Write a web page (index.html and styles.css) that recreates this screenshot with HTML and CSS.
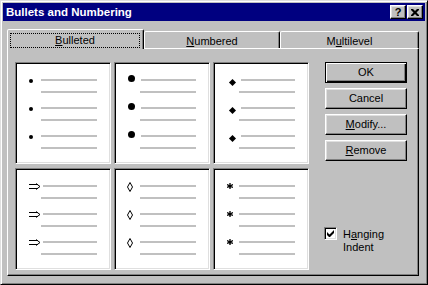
FILE: index.html
```html
<!DOCTYPE html>
<html lang="en">

<head>
    <meta charset="UTF-8" />
    <title>Bullets and Numbering</title>
    <link rel="stylesheet" href="styles.css">
</head>

<body>
    <div class="window">
        <!-- title bar -->
        <div class="titlebar">
            <span class="title">Bullets and Numbering</span>
            <span class="tbtn help">?</span>
            <span class="tbtn close">
                <svg width="8" height="7" viewBox="0 0 8 7"><path d="M0 0h2l2 2 2-2h2v1L5.5 3.5 8 6v1H6L4 5 2 7H0V6l2.5-2.5L0 1z" fill="#000"/></svg>
            </span>
        </div>
        <div class="content">
            <!-- tabs -->
            <div class="tabs">
                <div class="tab active"><span class="focus"><u>B</u>ulleted</span></div>
                <div class="tab t2"><u>N</u>umbered</div>
                <div class="tab t3">M<u>u</u>ltilevel</div>
            </div>
            <div class="panel">
                <div class="samples">
                    <div class="sample s1">
                        <div class="entry"><div class="lead"><span class="mark dot-s"></span><i class="line"></i></div><i class="line sub"></i></div>
                        <div class="entry"><div class="lead"><span class="mark dot-s"></span><i class="line"></i></div><i class="line sub"></i></div>
                        <div class="entry"><div class="lead"><span class="mark dot-s"></span><i class="line"></i></div><i class="line sub"></i></div>
                    </div>
                    <div class="sample s2">
                        <div class="entry"><div class="lead"><span class="mark dot-l"></span><i class="line"></i></div><i class="line sub"></i></div>
                        <div class="entry"><div class="lead"><span class="mark dot-l"></span><i class="line"></i></div><i class="line sub"></i></div>
                        <div class="entry"><div class="lead"><span class="mark dot-l"></span><i class="line"></i></div><i class="line sub"></i></div>
                    </div>
                    <div class="sample s3">
                        <div class="entry"><div class="lead"><span class="mark diamond"></span><i class="line"></i></div><i class="line sub"></i></div>
                        <div class="entry"><div class="lead"><span class="mark diamond"></span><i class="line"></i></div><i class="line sub"></i></div>
                        <div class="entry"><div class="lead"><span class="mark diamond"></span><i class="line"></i></div><i class="line sub"></i></div>
                    </div>
                    <div class="sample s4">
                        <div class="entry"><div class="lead"><svg class="mark" width="12" height="7" viewBox="0 0 12 7"><path d="M0 1.5h9M0 5.5h9M7 0.5l4 3-4 3" fill="none" stroke="#000"/></svg><i class="line"></i></div><i class="line sub"></i></div>
                        <div class="entry"><div class="lead"><svg class="mark" width="12" height="7" viewBox="0 0 12 7"><path d="M0 1.5h9M0 5.5h9M7 0.5l4 3-4 3" fill="none" stroke="#000"/></svg><i class="line"></i></div><i class="line sub"></i></div>
                        <div class="entry"><div class="lead"><svg class="mark" width="12" height="7" viewBox="0 0 12 7"><path d="M0 1.5h9M0 5.5h9M7 0.5l4 3-4 3" fill="none" stroke="#000"/></svg><i class="line"></i></div><i class="line sub"></i></div>
                    </div>
                    <div class="sample s5">
                        <div class="entry"><div class="lead"><svg class="mark loz" width="6" height="10" viewBox="0 0 6 10"><path d="M3 0.5 5.5 5 3 9.5 0.5 5z" fill="none" stroke="#000"/></svg><i class="line"></i></div><i class="line sub"></i></div>
                        <div class="entry"><div class="lead"><svg class="mark loz" width="6" height="10" viewBox="0 0 6 10"><path d="M3 0.5 5.5 5 3 9.5 0.5 5z" fill="none" stroke="#000"/></svg><i class="line"></i></div><i class="line sub"></i></div>
                        <div class="entry"><div class="lead"><svg class="mark loz" width="6" height="10" viewBox="0 0 6 10"><path d="M3 0.5 5.5 5 3 9.5 0.5 5z" fill="none" stroke="#000"/></svg><i class="line"></i></div><i class="line sub"></i></div>
                    </div>
                    <div class="sample s6">
                        <div class="entry"><div class="lead"><svg class="mark" width="6" height="6" viewBox="0 0 6 6"><path d="M3 0v6M0 1.5l6 3M0 4.5l6-3" stroke="#000" stroke-width="1.3"/></svg><i class="line"></i></div><i class="line sub"></i></div>
                        <div class="entry"><div class="lead"><svg class="mark" width="6" height="6" viewBox="0 0 6 6"><path d="M3 0v6M0 1.5l6 3M0 4.5l6-3" stroke="#000" stroke-width="1.3"/></svg><i class="line"></i></div><i class="line sub"></i></div>
                        <div class="entry"><div class="lead"><svg class="mark" width="6" height="6" viewBox="0 0 6 6"><path d="M3 0v6M0 1.5l6 3M0 4.5l6-3" stroke="#000" stroke-width="1.3"/></svg><i class="line"></i></div><i class="line sub"></i></div>
                    </div>
                </div>
                <div class="side">
                    <div class="btn default">OK</div>
                    <div class="btn">Cancel</div>
                    <div class="btn"><u>M</u>odify...</div>
                    <div class="btn"><u>R</u>emove</div>
                    <div class="check">
                        <span class="box">
                            <svg width="7" height="7" viewBox="0 0 7 7"><path d="M0 2v3l2 2h1l4-4V0L2.5 4.5z" fill="#000"/></svg>
                        </span>
                        <span class="label">H<u>a</u>nging<br>Indent</span>
                    </div>
                </div>
            </div>
        </div>
    </div>
</body>

</html>
```

FILE: styles.css
```css
body {
    margin: 0;
    padding: 0;
    background-color: #c0c0c0;
    font-family: "Liberation Sans", Arial, sans-serif;
    font-size: 11px;
    color: #000;
}

.window {
    width: 428px;
    height: 285px;
    box-sizing: border-box;
    padding: 2px;
    border: 1px solid;
    border-color: #dfdfdf #000 #000 #dfdfdf;
    box-shadow: inset 1px 1px #fff, inset -1px -1px #808080;
    background-color: #c0c0c0;
}

/* title bar */
.titlebar {
    display: flex;
    align-items: center;
    height: 18px;
    padding: 0 2px 0 3px;
    background-color: #000080;
    color: #fff;
}

.title {
    flex: 1;
    font-weight: bold;
    font-size: 11.5px;
}

.tbtn {
    display: flex;
    align-items: center;
    justify-content: center;
    width: 16px;
    height: 14px;
    box-sizing: border-box;
    border: 1px solid;
    border-color: #fff #000 #000 #fff;
    box-shadow: inset -1px -1px #808080, inset 1px 1px #dfdfdf;
    background-color: #c0c0c0;
    color: #000;
    font-weight: bold;
    font-size: 11px;
}

.tbtn.help {
    margin-right: 1px;
}

/* tabs */
.content {
    padding: 8px 0 0 4px;
}

.tabs {
    display: flex;
    align-items: flex-end;
    height: 19px;
}

.tab {
    box-sizing: border-box;
    height: 17px;
    padding-top: 3px;
    line-height: 13px;
    text-align: center;
    border: 1px solid;
    border-bottom: none;
    border-color: #fff #000 transparent #fff;
    border-radius: 2px 2px 0 0;
    box-shadow: inset -1px 0 #808080;
    background-color: #c0c0c0;
}

.tab.active {
    position: relative;
    z-index: 1;
    width: 137px;
    height: 20px;
    margin-bottom: -1px;
    padding-top: 3px;
}

.tab.t2 {
    width: 136px;
}

.tab.t3 {
    width: 139px;
}

.focus {
    display: block;
    height: 13px;
    margin: 0 3px 0 2px;
    border: 1px dotted #000;
    line-height: 13px;
}

.panel {
    display: flex;
    width: 412px;
    box-sizing: border-box;
    padding: 13px 0 5px 7px;
    border: 1px solid;
    border-color: #fff #000 #000 #fff;
    box-shadow: inset -1px -1px #808080;
}

/* bullet samples */
.samples {
    display: grid;
    grid-template-columns: repeat(3, 96px);
    grid-template-rows: repeat(2, 102px);
    column-gap: 3px;
    row-gap: 4px;
}

.sample {
    box-sizing: border-box;
    padding-top: 16px;
    border: 1px solid;
    border-color: #808080 #fff #fff #808080;
    box-shadow: inset 1px 1px #000, inset -1px -1px #dfdfdf;
    background-color: #fff;
}

.entry {
    margin-bottom: 14px;
}

.lead {
    display: flex;
    align-items: center;
    height: 2px;
    padding-right: 13px;
}

.line {
    display: block;
    flex: 1;
    height: 2px;
    background-color: #c0c0c0;
}

.line.sub {
    margin: 10px 13px 0 25px;
}

.mark {
    flex: none;
}

.dot-s {
    width: 4px;
    height: 4px;
    margin-top: 2px;
    border-radius: 50%;
    background-color: #000;
}

.dot-l {
    width: 7px;
    height: 7px;
    margin-top: -3px;
    border-radius: 50%;
    background-color: #000;
}

.diamond {
    width: 5px;
    height: 5px;
    margin: 4px 1px 0 1px;
    background-color: #000;
    transform: rotate(45deg);
}

.loz {
    margin-top: 2px;
}

.s1 .lead, .s2 .lead, .s4 .lead, .s6 .lead {
    padding-left: 13px;
}

.s3 .lead {
    padding-left: 15px;
}

.s5 .lead {
    padding-left: 12px;
}

.s1 .mark { margin-right: 8px; }
.s2 .mark { margin-right: 6px; }
.s3 .mark { margin-right: 6px; }
.s4 .mark { margin-right: 2px; }
.s5 .mark { margin-right: 7px; }
.s6 .mark { margin-right: 6px; }

/* buttons */
.side {
    display: flex;
    flex-direction: column;
    gap: 5px;
    width: 82px;
    margin-left: 16px;
}

.btn {
    height: 21px;
    box-sizing: border-box;
    border: 1px solid;
    border-color: #fff #000 #000 #fff;
    box-shadow: inset -1px -1px #808080, inset 1px 1px #dfdfdf;
    line-height: 19px;
    text-align: center;
}

.btn.default {
    border-color: #000;
    box-shadow: inset 1px 1px #fff, inset -1px -1px #000, inset -2px -2px #808080;
}

.check {
    display: flex;
    align-items: flex-start;
    gap: 6px;
    margin: 61px 0 0 -1px;
}

.check .box {
    display: flex;
    align-items: center;
    justify-content: center;
    width: 13px;
    height: 13px;
    box-sizing: border-box;
    border: 1px solid;
    border-color: #808080 #fff #fff #808080;
    box-shadow: inset 1px 1px #000, inset -1px -1px #dfdfdf;
    background-color: #fff;
}

.check .label {
    line-height: 13px;
    margin-top: 1px;
}
```
